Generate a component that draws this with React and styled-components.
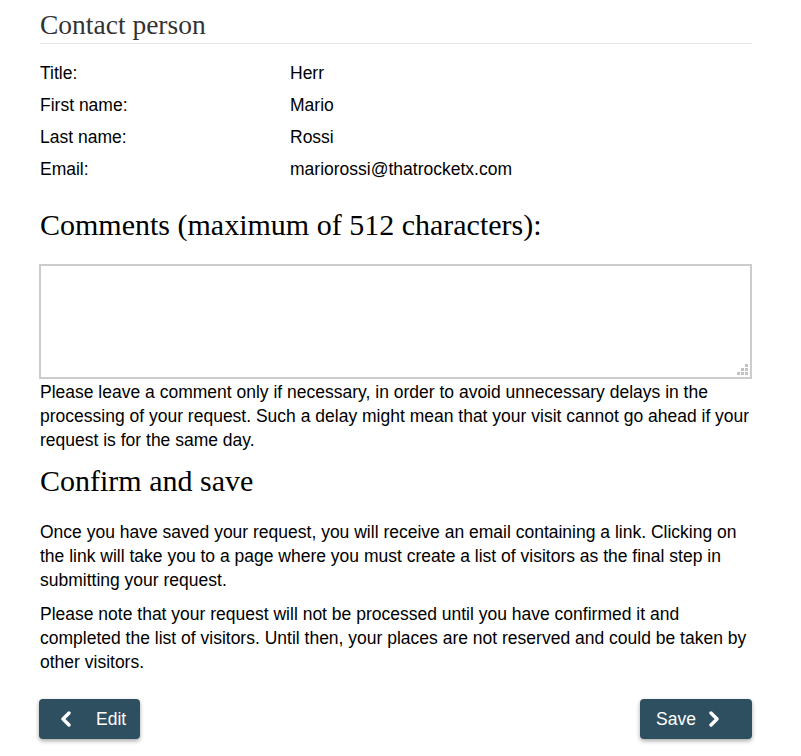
import React, { useState } from 'react'
import styled, { createGlobalStyle } from 'styled-components'

const GlobalStyle = createGlobalStyle`
  body {
    margin: 0;
    background: #fff;
    font-family: "Liberation Sans", Arial, sans-serif;
    color: #000;
  }
`

const Page = styled.div`
  width: 712px;
  padding: 10px 0 20px 40px;
`

const SectionTitle = styled.h2`
  margin: 0;
  font-family: "Liberation Serif", Georgia, serif;
  font-weight: normal;
  font-size: 27.5px;
  line-height: 30px;
  color: #333;
  padding-bottom: 3px;
  border-bottom: 1px solid #e5e5e5;
`

const InfoList = styled.div`
  margin-top: 13px;
  display: grid;
  grid-template-columns: 250px 1fr;
`

const InfoCell = styled.div`
  font-size: 17.5px;
  line-height: 32px;
`

const Heading = styled.h2`
  margin: ${p => p.$top}px 0 0;
  font-family: "Liberation Serif", Georgia, serif;
  font-weight: normal;
  font-size: 30px;
  line-height: 36px;
`

const CommentWrap = styled.div`
  position: relative;
  margin: 21px 0 1px -1px;
`

const CommentBox = styled.textarea`
  display: block;
  box-sizing: border-box;
  width: 713px;
  height: 115px;
  border: 2px solid #ccc;
  resize: none;
  font: 17.5px "Liberation Sans", Arial, sans-serif;
  outline: none;
`

const Grip = styled.svg`
  position: absolute;
  right: 4px;
  bottom: 4px;
  pointer-events: none;
`

const Text = styled.p`
  margin: ${p => p.$top || 0}px 0 0;
  font-size: 17.5px;
  line-height: 24px;
`

const ButtonBar = styled.div`
  margin-top: 25px;
  display: flex;
  justify-content: space-between;
`

const NavButton = styled.button`
  display: flex;
  align-items: center;
  gap: ${p => p.$gap}px;
  height: 40px;
  padding: 0 ${p => p.$right}px 0 ${p => p.$left}px;
  margin-left: ${p => p.$shift || 0}px;
  border: none;
  border-radius: 4px;
  background: #2e4f5f;
  color: #fff;
  font: 17.5px "Liberation Sans", Arial, sans-serif;
  box-shadow: 0 2px 4px rgba(0, 0, 0, 0.35);
  cursor: pointer;
`

const Chevron = ({ dir }) => (
  <svg width="12" height="16" viewBox="0 0 12 16">
    <polyline
      points={dir === 'left' ? '9,2 3,8 9,14' : '3,2 9,8 3,14'}
      fill="none"
      stroke="#fff"
      strokeWidth="3.4"
      strokeLinecap="round"
      strokeLinejoin="round"
    />
  </svg>
)

const gripDots = [[8, 0], [4, 4], [8, 4], [0, 8], [4, 8], [8, 8]]

const contact = [
  ['Title:', 'Herr'],
  ['First name:', 'Mario'],
  ['Last name:', 'Rossi'],
  ['Email:', 'mariorossi@thatrocketx.com'],
]

const App = () => {
  const [comment, setComment] = useState('')

  return (
    <Page>
      <GlobalStyle />
      <SectionTitle>Contact person</SectionTitle>
      <InfoList>
        {contact.map(([label, value]) => (
          <React.Fragment key={label}>
            <InfoCell>{label}</InfoCell>
            <InfoCell>{value}</InfoCell>
          </React.Fragment>
        ))}
      </InfoList>

      <Heading $top={22}>Comments (maximum of 512 characters):</Heading>
      <CommentWrap>
        <CommentBox maxLength={512} value={comment} onChange={e => setComment(e.target.value)} />
        <Grip width="11" height="11" viewBox="0 0 11 11">
          {gripDots.map(([x, y]) => (
            <rect key={`${x}-${y}`} x={x} y={y} width="3" height="3" fill="#c4c4c4" />
          ))}
        </Grip>
      </CommentWrap>
      <Text>
        Please leave a comment only if necessary, in order to avoid unnecessary delays in the
        processing of your request. Such a delay might mean that your visit cannot go ahead if your
        request is for the same day.
      </Text>

      <Heading $top={11}>Confirm and save</Heading>
      <Text $top={21}>
        Once you have saved your request, you will receive an email containing a link. Clicking on
        the link will take you to a page where you must create a list of visitors as the final step in
        submitting your request.
      </Text>
      <Text $top={10}>
        Please note that your request will not be processed until you have confirmed it and
        completed the list of visitors. Until then, your places are not reserved and could be taken by
        other visitors.
      </Text>

      <ButtonBar>
        <NavButton $left={21} $right={14} $gap={24} $shift={-1}>
          <Chevron dir="left" />
          Edit
        </NavButton>
        <NavButton $left={16} $right={32} $gap={12}>
          Save
          <Chevron dir="right" />
        </NavButton>
      </ButtonBar>
    </Page>
  )
}

export default App
